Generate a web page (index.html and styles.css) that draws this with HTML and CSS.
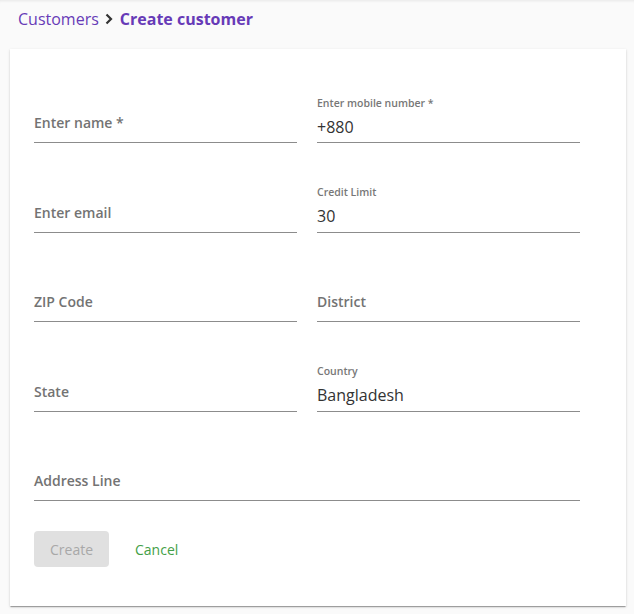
FILE: index.html
```html
<!DOCTYPE html>
<html lang="en">
<head>
<meta charset="utf-8">
<title>Create customer</title>
<link rel="stylesheet" href="styles.css">
</head>
<body>
<header class="topbar">
  <nav class="crumbs">
    <a class="crumb-link" href="#">Customers</a>
    <svg class="chev" width="10" height="12" viewBox="0 0 10 12"><polyline points="2.5,1.5 7,6 2.5,10.5" fill="none" stroke="#333" stroke-width="2.2"/></svg>
    <span class="crumb-current">Create customer</span>
  </nav>
</header>
<main class="card">
  <form class="form">
    <div class="grid">
      <div class="field"><span class="placeholder">Enter name *</span></div>
      <div class="field"><span class="float">Enter mobile number *</span><span class="value">+880</span></div>
      <div class="field"><span class="placeholder">Enter email</span></div>
      <div class="field"><span class="float">Credit Limit</span><span class="value">30</span></div>
      <div class="field"><span class="placeholder">ZIP Code</span></div>
      <div class="field"><span class="placeholder">District</span></div>
      <div class="field"><span class="placeholder">State</span></div>
      <div class="field"><span class="float">Country</span><span class="value">Bangladesh</span></div>
      <div class="field wide"><span class="placeholder">Address Line</span></div>
    </div>
    <div class="actions">
      <button type="button" class="btn btn-create" disabled>Create</button>
      <button type="button" class="btn btn-cancel">Cancel</button>
    </div>
  </form>
</main>
</body>
</html>
```
FILE: styles.css
```css
* { box-sizing: border-box; }
html, body { margin: 0; padding: 0; }
body {
  background: #fafafa;
  font-family: "Open Sans", "Noto Sans", sans-serif;
  width: 634px;
  height: 614px;
  overflow: hidden;
  box-shadow: inset 0 3px 3px -2px rgba(0,0,0,0.08);
}
.topbar {
  height: 49px;
  padding: 7px 0 0 18px;
}
.crumbs {
  display: flex;
  align-items: center;
  height: 24px;
  font-size: 16px;
}
.crumb-link {
  color: #673ab7;
  text-decoration: none;
  font-weight: 400;
}
.chev { margin: 0 6px 0 5px; }
.crumb-current {
  color: #673ab7;
  font-weight: 700;
}
.card {
  margin: 0 8px 0 10px;
  width: 616px;
  height: 557px;
  background: #fff;
  box-shadow: 0 2px 1px -1px rgba(0,0,0,0.2), 0 1px 1px 0 rgba(0,0,0,0.14), 0 1px 3px 0 rgba(0,0,0,0.12);
  padding: 34px 0 0 24px;
}
.grid {
  display: grid;
  grid-template-columns: 263px 263px;
  column-gap: 20px;
  row-gap: 29.5px;
}
.field {
  height: 60px;
  border-bottom: 1px solid #8c8c8c;
  display: flex;
  flex-direction: column;
  justify-content: flex-end;
}
.field.wide { grid-column: 1 / 3; }
.placeholder {
  font-size: 14px;
  line-height: 20px;
  font-weight: 600;
  color: #737373;
  padding-bottom: 9px;
}
.float {
  font-size: 10.5px;
  line-height: 14px;
  font-weight: 600;
  color: #777;
  margin-bottom: 5px;
}
.value {
  font-size: 16px;
  line-height: 24px;
  color: #333;
  padding-bottom: 3.5px;
}
.actions {
  display: flex;
  align-items: center;
  margin-top: 30px;
}
.btn {
  font-family: "Open Sans", "Noto Sans", sans-serif;
  font-size: 14px;
  height: 36px;
  border: 0;
  border-radius: 4px;
  padding: 0 16px;
  background: transparent;
  cursor: pointer;
}
.btn-create {
  width: 75px;
  background: #e0e0e0;
  color: #a8a8a8;
}
.btn-cancel {
  margin-left: 10px;
  color: #43a047;
}
```
